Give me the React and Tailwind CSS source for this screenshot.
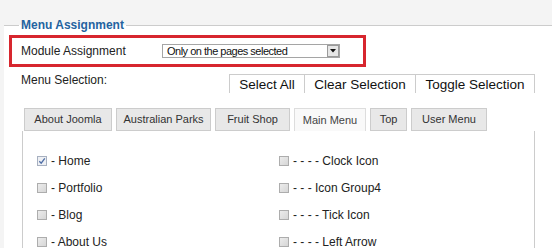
import React from 'react';

const tabs = [
  { label: 'About Joomla', w: 'w-[88px]' },
  { label: 'Australian Parks', w: 'w-[95px]' },
  { label: 'Fruit Shop', w: 'w-[75px]' },
  { label: 'Main Menu', w: 'w-[72px]', active: true },
  { label: 'Top', w: 'w-[37px]' },
  { label: 'User Menu', w: 'w-[76px]' },
];

const leftItems = [
  { label: '- Home', checked: true },
  { label: '- Portfolio' },
  { label: '- Blog' },
  { label: '- About Us' },
];

const rightItems = [
  { label: '- - - - Clock Icon' },
  { label: '- - - Icon Group4' },
  { label: '- - - - Tick Icon' },
  { label: '- - - - Left Arrow' },
];

const Check = ({ checked }) => (
  <span
    className={
      checked
        ? 'relative w-[10px] h-[10px] border border-[#a7b0c0] bg-[#eef0f4]'
        : 'w-[10px] h-[10px] border border-[#adadad] bg-gradient-to-br from-[#ececec] to-[#d6d6d6]'
    }
  >
    {checked && (
      <svg viewBox="0 0 8 8" className="absolute inset-0 w-[8px] h-[8px]">
        <path d="M1.3 4.2 L3.2 6.2 L6.8 1.4" fill="none" stroke="#4f6ea6" strokeWidth="1.3" />
      </svg>
    )}
  </span>
);

const Item = ({ label, checked }) => (
  <div className="flex items-center h-[27px] gap-[4px]">
    <Check checked={checked} />
    <span className="text-[12px] text-[#222]">{label}</span>
  </div>
);

export default function App() {
  return (
    <div className="w-[552px] h-[248px] overflow-hidden bg-[#f4f4f4] pt-[18px] font-['Liberation_Sans',Arial,sans-serif]">
      <fieldset className="ml-[4px] border-t border-[#cccccc] bg-white">
        <legend className="ml-[15px] px-[2px] text-[12px] leading-[14px] font-bold text-[#2463a0]">
          Menu Assignment
        </legend>

        {/* module assignment */}
        <div className="ml-[5px] mt-[3px] w-[357px] h-[32px] border-[3px] border-[#d7262e] flex items-center">
          <div className="w-[150px] pl-[9px] text-[12px] text-[#222]">Module Assignment</div>
          <div className="w-[178px] h-[14px] border border-[#a5a5a5] bg-white flex items-center justify-between">
            <span className="pl-[4px] text-[11px] leading-[12px] tracking-[-0.5px] text-[#111]">
              Only on the pages selected
            </span>
            <span className="w-[12px] h-[12px] border border-[#9a9a9a] bg-[#e6e6e6] flex items-center justify-center">
              <svg viewBox="0 0 6 4" className="w-[6px] h-[4px]">
                <path d="M0 0 H6 L3 3.5 Z" fill="#111" />
              </svg>
            </span>
          </div>
        </div>

        {/* menu selection */}
        <div className="mt-[7px] pl-[17px] pr-[17px] flex justify-between items-start">
          <div className="text-[12px] leading-[12px] text-[#222]">Menu Selection:</div>
          <div className="flex">
            <button className="w-[75px] h-[19px] leading-[19px] text-[13.5px] text-[#111] bg-white border-t border-l border-[#cccccc] text-center">
              Select All
            </button>
            <button className="w-[111px] h-[19px] leading-[19px] text-[13.5px] text-[#111] bg-white border-t border-l border-[#cccccc] text-center">
              Clear Selection
            </button>
            <button className="w-[120px] h-[19px] leading-[19px] text-[13.5px] text-[#111] bg-white border-t border-l border-r border-[#cccccc] text-center">
              Toggle Selection
            </button>
          </div>
        </div>

        {/* tabs */}
        <div className="mt-[15px] pl-[20px] flex gap-[4px]">
          {tabs.map((t) => (
            <div
              key={t.label}
              className={
                t.active
                  ? `${t.w} h-[23px] leading-[22px] text-[11px] text-center text-[#444] bg-[#f9f9f9] border-t border-l border-r border-[#dddddd]`
                  : `${t.w} h-[23px] leading-[21px] text-[11px] text-center text-[#333] bg-[#e8e8e8] border border-[#cccccc]`
              }
            >
              {t.label}
            </div>
          ))}
        </div>

        {/* menu items */}
        <div className="ml-[18px] w-[513px] h-[120px] border-l border-r border-[#cccccc] pt-[16px] pl-[14px] grid grid-cols-[242px_1fr] content-start">
          <div>
            {leftItems.map((i) => (
              <Item key={i.label} {...i} />
            ))}
          </div>
          <div>
            {rightItems.map((i) => (
              <Item key={i.label} {...i} />
            ))}
          </div>
        </div>
      </fieldset>
    </div>
  );
}
